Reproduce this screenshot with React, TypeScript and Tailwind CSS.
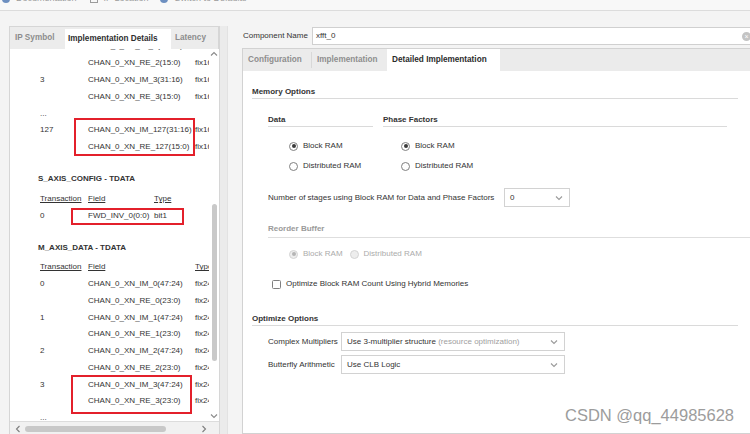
import React from 'react';

type Dir = 'up' | 'down' | 'left' | 'right';

const Chevron = ({ dir, className }: { dir: Dir; className?: string }) => {
  const d = {
    up: 'M1 5.5 L4 2.5 L7 5.5',
    down: 'M1 2.5 L4 5.5 L7 2.5',
    left: 'M5.5 1 L2.5 4 L5.5 7',
    right: 'M2.5 1 L5.5 4 L2.5 7',
  }[dir];
  return (
    <svg width="8" height="8" viewBox="0 0 8 8" className={className}>
      <path d={d} fill="none" stroke="currentColor" strokeWidth="1.1" />
    </svg>
  );
};

const Radio = ({ checked, disabled, label }: { checked?: boolean; disabled?: boolean; label: string }) => (
  <div className="flex items-center gap-[5px]">
    <span
      className={`w-[9px] h-[9px] rounded-full border flex items-center justify-center ${
        disabled ? 'border-[#d4d4d4] bg-[#ededed]' : 'border-[#808080] bg-white'
      }`}
    >
      {checked && <span className={`w-[4px] h-[4px] rounded-full ${disabled ? 'bg-[#b4b4b4]' : 'bg-[#3a3a3a]'}`} />}
    </span>
    <span className={disabled ? 'text-[#ababab]' : ''}>{label}</span>
  </div>
);

const Select = ({ children, className }: { children: React.ReactNode; className?: string }) => (
  <div className={`h-[19px] border border-[#d2d2d2] bg-white flex items-center pl-[5px] pr-[6px] ${className ?? ''}`}>
    <span className="flex-1 whitespace-nowrap">{children}</span>
    <Chevron dir="down" className="text-[#9a9a9a]" />
  </div>
);

const topRows = [
  { n: '2', f: 'CHAN_0_XN_IM_2(31:16)', t: 'fix16_15' },
  { n: '', f: 'CHAN_0_XN_RE_2(15:0)', t: 'fix16_15' },
  { n: '3', f: 'CHAN_0_XN_IM_3(31:16)', t: 'fix16_15' },
  { n: '', f: 'CHAN_0_XN_RE_3(15:0)', t: 'fix16_15' },
  { n: '...', f: '', t: '' },
  { n: '127', f: 'CHAN_0_XN_IM_127(31:16)', t: 'fix16_15' },
  { n: '', f: 'CHAN_0_XN_RE_127(15:0)', t: 'fix16_15' },
];

const outRows = [
  { n: '0', f: 'CHAN_0_XN_IM_0(47:24)' },
  { n: '', f: 'CHAN_0_XN_RE_0(23:0)' },
  { n: '1', f: 'CHAN_0_XN_IM_1(47:24)' },
  { n: '', f: 'CHAN_0_XN_RE_1(23:0)' },
  { n: '2', f: 'CHAN_0_XN_IM_2(47:24)' },
  { n: '', f: 'CHAN_0_XN_RE_2(23:0)' },
  { n: '3', f: 'CHAN_0_XN_IM_3(47:24)' },
  { n: '', f: 'CHAN_0_XN_RE_3(23:0)' },
  { n: '...', f: '' },
];

const Row = ({ n, f, t, fw = 'w-[107px]' }: { n: string; f: string; t: string; fw?: string }) => (
  <div className="h-[16.8px] flex items-center whitespace-nowrap">
    <span className="w-[48px] shrink-0">{n}</span>
    <span className={`${fw} shrink-0`}>{f}</span>
    <span>{t}</span>
  </div>
);

export default function App() {
  return (
    <div className="relative w-[750px] h-[434px] overflow-hidden bg-[#f4f4f4] flex flex-col font-['Liberation_Sans',Arial,sans-serif] text-[8px] text-[#333]">
      {/* toolbar strip, scrolled mostly out of view */}
      <div className="h-[11px] shrink-0 border-b border-[#dcdcdc] bg-[#f8f8f8] overflow-hidden">
        <div className="-mt-[6px] h-[10px] flex items-center text-[9px] text-[#9c9c9c]">
          <span className="ml-[2px] w-[8px] h-[8px] rounded-full bg-[#6d8fc0]" />
          <span className="ml-[6px]">Documentation</span>
          <span className="ml-[13px] w-[8px] h-[7px] border border-[#9c9c9c]" />
          <span className="ml-[6px]">IP Location</span>
          <span className="ml-[12px] w-[8px] h-[8px] rounded-full bg-[#6d8fc0]" />
          <span className="ml-[6px]">Switch to Defaults</span>
        </div>
      </div>

      <div className="flex flex-1 min-h-0">
        {/* left panel */}
        <div className="pl-[9px] pt-[15px] flex shrink-0">
          <div className="w-[211px] h-[410px] border border-[#d6d6d6] bg-white flex flex-col">
            <div className="h-[22px] shrink-0 bg-[#ececec] flex items-end font-bold text-[8.2px] text-[#8c8c8c]">
              <div className="h-full flex items-center pl-[5px] w-[55px]">IP Symbol</div>
              <div className="h-[20px] w-[106px] bg-white flex items-center pl-[3px] text-[#2e2e2e]">
                Implementation Details
              </div>
              <div className="h-full flex items-center pl-[4px] flex-1 border-r border-[#d6d6d6]">Latency</div>
            </div>
            <div className="h-[372px] shrink-0 flex">
              <div className="flex-1 overflow-hidden">
                <div className="-mt-[11px] pl-[30px]">
                  {topRows.map((r, i) => (
                    <Row key={i} n={r.n} f={r.f} t={r.t} />
                  ))}
                  <div className="mt-[15.2px] h-[16.8px] flex items-center -ml-[2px] font-bold">
                    S_AXIS_CONFIG - TDATA
                  </div>
                  <div className="mt-[3.2px] h-[16.8px] flex items-center underline">
                    <span className="w-[48px]">Transaction</span>
                    <span className="w-[66px]">Field</span>
                    <span>Type</span>
                  </div>
                  <Row n="0" f="FWD_INV_0(0:0)" t="bit1" fw="w-[66px]" />
                  <div className="mt-[14.8px] h-[16.8px] flex items-center -ml-[2px] font-bold">
                    M_AXIS_DATA - TDATA
                  </div>
                  <div className="mt-[2.9px] h-[16.8px] flex items-center underline whitespace-nowrap">
                    <span className="w-[48px] shrink-0">Transaction</span>
                    <span className="w-[107px] shrink-0">Field</span>
                    <span>Type</span>
                  </div>
                  {outRows.map((r, i) => (
                    <div key={i} className="h-[16.75px] flex items-center whitespace-nowrap">
                      <span className="w-[48px] shrink-0">{r.n}</span>
                      <span className="w-[107px] shrink-0">{r.f}</span>
                      <span>{r.f ? 'fix24_23' : ''}</span>
                    </div>
                  ))}
                </div>
              </div>
              <div className="w-[10px] shrink-0 flex flex-col items-center text-[#8a8a8a]">
                <Chevron dir="up" className="mt-[1px]" />
                <div className="mt-[146px] w-[5px] h-[157px] rounded-full bg-[#c9c9c9]" />
                <div className="flex-1" />
                <Chevron dir="down" className="mb-[1px]" />
              </div>
            </div>
            <div className="h-[15px] shrink-0 border-t border-[#dcdcdc] bg-[#f1f1f1] flex items-center pl-[4px] text-[#7e7e7e]">
              <Chevron dir="left" />
              <div className="ml-[3px] w-[141px] h-[6px] rounded-full bg-[#c8c8c8]" />
              <div className="flex-1" />
              <Chevron dir="right" className="mr-[11px]" />
            </div>
          </div>
          <div className="w-[8px] h-[410px] bg-[#ebebeb] border-r border-[#e2e2e2]" />
        </div>

        {/* right panel */}
        <div className="ml-[14px] flex-1 pt-[16px] flex flex-col min-w-0">
          <div className="h-[18px] flex items-center shrink-0">
            <span className="w-[70px] pl-[1px] whitespace-nowrap">Component Name</span>
            <div className="flex-1 h-[18px] border border-[#d0d0d0] bg-white flex items-center pl-[3px] -mr-[2px]">
              <span className="flex-1">xfft_0</span>
              <span className="w-[9px] h-[9px] rounded-full bg-[#c4c4c4] flex items-center justify-center text-white text-[7px] leading-none">
                ×
              </span>
            </div>
          </div>

          <div className="mt-[3px] flex-1 border-l border-t border-b border-[#d2d2d2] bg-white flex flex-col">
            <div className="h-[22px] shrink-0 bg-[#ebebeb] flex font-bold text-[8.2px] text-[#8e8e8e]">
              <div className="w-[69px] pl-[5px] flex items-center border-r border-[#d8d8d8] my-[3px]">Configuration</div>
              <div className="w-[75px] pl-[5px] flex items-center">Implementation</div>
              <div className="w-[113px] pl-[5px] flex items-center bg-white text-[#2b2b2b] whitespace-nowrap">
                Detailed Implementation
              </div>
            </div>

            <div className="pl-[9px] flex flex-col">
              <div className="mt-[14px] mr-[12px] h-[14px] leading-[13px] border-b border-[#dadada] font-bold">
                Memory Options
              </div>

              <div className="ml-[16px] mt-[14px] flex">
                <div className="w-[105px] h-[14px] leading-[13px] border-b border-[#dadada] font-bold">Data</div>
                <div className="ml-[10px] w-[344px] h-[14px] leading-[13px] border-b border-[#dadada] font-bold">
                  Phase Factors
                </div>
              </div>

              <div className="mt-[9px] flex">
                <div className="ml-[37px] w-[112px] flex flex-col">
                  <div className="h-[20px] flex items-center">
                    <Radio checked label="Block RAM" />
                  </div>
                  <div className="h-[20px] flex items-center">
                    <Radio label="Distributed RAM" />
                  </div>
                </div>
                <div className="flex flex-col">
                  <div className="h-[20px] flex items-center">
                    <Radio checked label="Block RAM" />
                  </div>
                  <div className="h-[20px] flex items-center">
                    <Radio label="Distributed RAM" />
                  </div>
                </div>
              </div>

              <div className="ml-[16px] mt-[12px] flex items-center">
                <span className="w-[236px] whitespace-nowrap">
                  Number of stages using Block RAM for Data and Phase Factors
                </span>
                <Select className="w-[66px]">0</Select>
              </div>

              <div className="ml-[16px] mt-[15px] h-[16px] leading-[13px] border-b border-[#dedede] font-bold text-[#9a9a9a]">
                Reorder Buffer
              </div>

              <div className="ml-[37px] mt-[6px] h-[20px] flex items-center gap-[7px]">
                <Radio checked disabled label="Block RAM" />
                <Radio disabled label="Distributed RAM" />
              </div>

              <div className="ml-[20px] mt-[10px] h-[20px] flex items-center gap-[5px]">
                <span className="w-[9px] h-[9px] rounded-[1.5px] border border-[#808080] bg-white" />
                <span>Optimize Block RAM Count Using Hybrid Memories</span>
              </div>

              <div className="mt-[18px] mr-[12px] h-[14px] leading-[13px] border-b border-[#dadada] font-bold">
                Optimize Options
              </div>

              <div className="ml-[16px] mt-[6px] flex items-center">
                <span className="w-[73px] whitespace-nowrap">Complex Multipliers</span>
                <Select className="w-[224px]">
                  Use 3-multiplier structure <span className="text-[#a0a0a0]">(resource optimization)</span>
                </Select>
              </div>
              <div className="ml-[16px] mt-[4px] flex items-center">
                <span className="w-[73px] whitespace-nowrap">Butterfly Arithmetic</span>
                <Select className="w-[224px]">Use CLB Logic</Select>
              </div>
            </div>
          </div>
        </div>
      </div>

      {/* annotation boxes */}
      <div className="absolute left-[74px] top-[118px] w-[121px] h-[38px] border-2 border-[#e3202b]" />
      <div className="absolute left-[71px] top-[208px] w-[113px] h-[17px] border-2 border-[#e3202b]" />
      <div className="absolute left-[71px] top-[375px] w-[121px] h-[39px] border-2 border-[#e3202b]" />

      {/* watermark */}
      <div className="absolute left-[565px] top-[405px] text-[16.5px] leading-[20px] text-[#9c9c9c] whitespace-nowrap">
        CSDN @qq_44985628
      </div>
    </div>
  );
}
